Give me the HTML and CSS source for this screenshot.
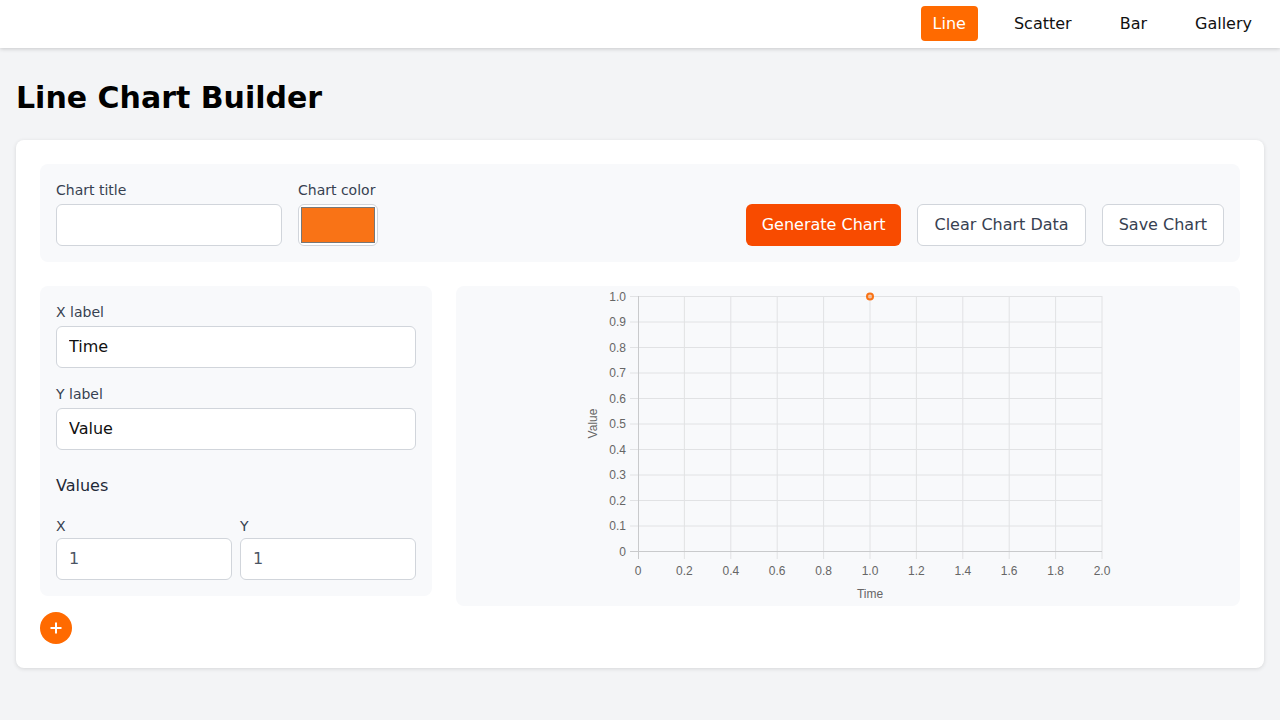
FILE: index.html
```html
<!DOCTYPE html>
<html lang="en">
<head>
<meta charset="utf-8">
<title>Line Chart Builder</title>
<link rel="stylesheet" href="styles.css">
</head>
<body>
<nav class="topnav">
  <a class="nav-item active">Line</a>
  <a class="nav-item">Scatter</a>
  <a class="nav-item">Bar</a>
  <a class="nav-item">Gallery</a>
</nav>
<main class="main">
  <h1 class="page-title">Line Chart Builder</h1>
  <section class="card">
    <div class="toolbar">
      <div class="field field-title">
        <label class="label">Chart title</label>
        <input class="input" type="text" value="">
      </div>
      <div class="field">
        <label class="label">Chart color</label>
        <input class="color-input" type="color" value="#f97316">
      </div>
      <div class="actions">
        <button class="btn btn-primary">Generate Chart</button>
        <button class="btn btn-outline">Clear Chart Data</button>
        <button class="btn btn-outline">Save Chart</button>
      </div>
    </div>
    <div class="workspace">
      <div class="left-col">
        <div class="panel">
          <div class="field">
            <label class="label">X label</label>
            <input class="input" type="text" value="Time">
          </div>
          <div class="field field-gap">
            <label class="label">Y label</label>
            <input class="input" type="text" value="Value">
          </div>
          <h2 class="values-heading">Values</h2>
          <div class="xy-row">
            <div class="field">
              <label class="label label-xy">X</label>
              <input class="input input-num" type="text" value="1">
            </div>
            <div class="field">
              <label class="label label-xy">Y</label>
              <input class="input input-num" type="text" value="1">
            </div>
          </div>
        </div>
        <button class="add-btn" aria-label="Add">
          <svg width="16" height="16" viewBox="0 0 16 16"><path d="M8 2.5v11M2.5 8h11" stroke="#fff" stroke-width="2" fill="none"/></svg>
        </button>
      </div>
      <div class="chart-panel">
        <svg class="chart" width="784" height="320" viewBox="0 0 784 320">
          <g stroke="#e1e2e4" stroke-width="1">
            <line x1="228.4" y1="10" x2="228.4" y2="273"/>
            <line x1="274.8" y1="10" x2="274.8" y2="273"/>
            <line x1="321.2" y1="10" x2="321.2" y2="273"/>
            <line x1="367.6" y1="10" x2="367.6" y2="273"/>
            <line x1="414" y1="10" x2="414" y2="273"/>
            <line x1="460.4" y1="10" x2="460.4" y2="273"/>
            <line x1="506.8" y1="10" x2="506.8" y2="273"/>
            <line x1="553.2" y1="10" x2="553.2" y2="273"/>
            <line x1="599.6" y1="10" x2="599.6" y2="273"/>
            <line x1="646" y1="10" x2="646" y2="273"/>
            <line x1="174" y1="10.5" x2="646" y2="10.5"/>
            <line x1="174" y1="36" x2="646" y2="36"/>
            <line x1="174" y1="61.5" x2="646" y2="61.5"/>
            <line x1="174" y1="87" x2="646" y2="87"/>
            <line x1="174" y1="112.5" x2="646" y2="112.5"/>
            <line x1="174" y1="138" x2="646" y2="138"/>
            <line x1="174" y1="163.5" x2="646" y2="163.5"/>
            <line x1="174" y1="189" x2="646" y2="189"/>
            <line x1="174" y1="214.5" x2="646" y2="214.5"/>
            <line x1="174" y1="240" x2="646" y2="240"/>
          </g>
          <g stroke="#c9cacc" stroke-width="1">
            <line x1="182.5" y1="10" x2="182.5" y2="273"/>
            <line x1="174" y1="265.5" x2="646" y2="265.5"/>
          </g>
          <g class="tick" text-anchor="end">
            <text x="170" y="14.5">1.0</text>
            <text x="170" y="40">0.9</text>
            <text x="170" y="65.5">0.8</text>
            <text x="170" y="91">0.7</text>
            <text x="170" y="116.5">0.6</text>
            <text x="170" y="142">0.5</text>
            <text x="170" y="167.5">0.4</text>
            <text x="170" y="193">0.3</text>
            <text x="170" y="218.5">0.2</text>
            <text x="170" y="244">0.1</text>
            <text x="170" y="269.5">0</text>
          </g>
          <g class="tick" text-anchor="middle">
            <text x="182" y="289">0</text>
            <text x="228.4" y="289">0.2</text>
            <text x="274.8" y="289">0.4</text>
            <text x="321.2" y="289">0.6</text>
            <text x="367.6" y="289">0.8</text>
            <text x="414" y="289">1.0</text>
            <text x="460.4" y="289">1.2</text>
            <text x="506.8" y="289">1.4</text>
            <text x="553.2" y="289">1.6</text>
            <text x="599.6" y="289">1.8</text>
            <text x="646" y="289">2.0</text>
          </g>
          <text class="tick" x="414" y="312" text-anchor="middle">Time</text>
          <text class="tick" x="0" y="0" text-anchor="middle" transform="translate(140.5 137.5) rotate(-90)">Value</text>
          <circle cx="414" cy="10.5" r="3" fill="rgba(249,115,22,0.35)" stroke="#f97316" stroke-width="2"/>
        </svg>
      </div>
    </div>
  </section>
</main>
</body>
</html>
```
FILE: styles.css
```css
* { box-sizing: border-box; }
html, body { margin: 0; padding: 0; }
body {
  background: #f3f4f6;
  font-family: "DejaVu Sans", sans-serif;
  color: #111827;
}
.topnav {
  height: 48px;
  background: #fff;
  box-shadow: 0 1px 4px rgba(0,0,0,0.18);
  display: flex;
  justify-content: flex-end;
  align-items: flex-start;
  gap: 24px;
  padding: 6px 16px 0;
  position: relative;
}
.nav-item {
  font-size: 16px;
  line-height: 19px;
  padding: 8px 12px;
  border-radius: 4px;
  color: #111;
  cursor: pointer;
}
.nav-item.active {
  background: #ff6a00;
  color: #fff;
}
.main { padding: 16px; }
.page-title {
  margin: 16px 0 24px;
  font-size: 30px;
  line-height: 36px;
  font-weight: bold;
  color: #000;
}
.card {
  background: #fff;
  border-radius: 8px;
  box-shadow: 0 1px 4px rgba(0,0,0,0.12);
  padding: 24px;
}
.toolbar {
  background: #f8f9fb;
  border-radius: 8px;
  padding: 16px;
  display: flex;
  align-items: flex-end;
  gap: 16px;
}
.field { display: flex; flex-direction: column; }
.field-title { width: 226px; }
.label {
  font-size: 14px;
  line-height: 20px;
  color: #374151;
  margin-bottom: 4px;
}
.label-xy { margin-bottom: 2px; }
.input {
  height: 42px;
  width: 100%;
  border: 1px solid #d1d5db;
  border-radius: 6px;
  background: #fff;
  padding: 0 12px 1px;
  font-family: "DejaVu Sans", sans-serif;
  font-size: 16px;
  color: #111;
  outline: none;
}
.input-num { color: #4b5563; }
.color-input {
  width: 80px;
  height: 42px;
  border: 1px solid #d1d5db;
  border-radius: 6px;
  background: #fff;
  padding: 2px;
  margin: 0;
}
.color-input::-webkit-color-swatch-wrapper { padding: 0; }
.color-input::-webkit-color-swatch { border: 1px solid #777; border-radius: 0; }
.actions {
  margin-left: auto;
  display: flex;
  gap: 16px;
}
.btn {
  height: 42px;
  padding: 0 16px 2px;
  border-radius: 6px;
  font-family: "DejaVu Sans", sans-serif;
  font-size: 16px;
  cursor: pointer;
}
.btn-primary {
  background: #f84b00;
  color: #fff;
  border: none;
}
.btn-outline {
  background: #fff;
  color: #374151;
  border: 1px solid #d1d5db;
}
.workspace {
  margin-top: 24px;
  display: grid;
  grid-template-columns: 1fr 2fr;
  gap: 24px;
  align-items: start;
}
.left-col {
  display: flex;
  flex-direction: column;
  align-items: flex-start;
  gap: 16px;
}
.panel {
  width: 100%;
  background: #f8f9fb;
  border-radius: 8px;
  padding: 16px;
}
.field-gap { margin-top: 16px; }
.values-heading {
  margin: 24px 0 18px;
  font-size: 16px;
  line-height: 24px;
  font-weight: normal;
  color: #1f2937;
}
.xy-row {
  display: grid;
  grid-template-columns: 1fr 1fr;
  gap: 8px;
}
.add-btn {
  width: 32px;
  height: 32px;
  border-radius: 50%;
  border: none;
  background: #ff6a00;
  padding: 0;
  display: flex;
  align-items: center;
  justify-content: center;
  cursor: pointer;
}
.chart-panel {
  background: #f8f9fb;
  border-radius: 8px;
  height: 320px;
  overflow: hidden;
}
.chart { display: block; }
.tick {
  font-family: "Liberation Sans", Arial, sans-serif;
  font-size: 12px;
  fill: #666;
}
```
